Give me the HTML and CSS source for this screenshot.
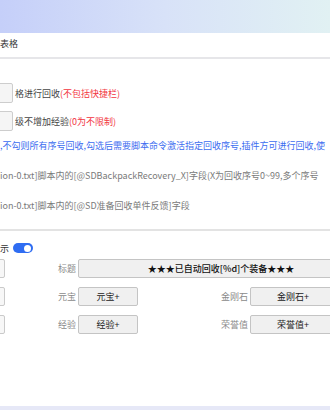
FILE: index.html
```html
<!DOCTYPE html>
<html lang="zh-CN">
<head>
  <meta charset="UTF-8" />
  <meta name="viewport" content="width=device-width, initial-scale=1.0"/>
  <title>回收设置</title>
  <link rel="stylesheet" href="styles.css">
</head>
<body>
  <div class="page">
    <div class="banner"></div>

    <div class="tabs">
      <span class="tab">表格</span>
    </div>

    <div class="content">
      <div class="opt-row">
        <input class="num" type="text" value="">
        <span>格进行回收</span><span class="red">(不包括快捷栏)</span>
      </div>
      <div class="opt-row">
        <input class="num" type="text" value="">
        <span>级不增加经验</span><span class="red">(0为不限制)</span>
      </div>
      <p class="note blue">,不勾则所有序号回收,勾选后需要脚本命令激活指定回收序号,插件方可进行回收,使</p>
      <p class="note">ion-0.txt]脚本内的[@SDBackpackRecovery_X]字段(X为回收序号0~99,多个序号</p>
      <p class="note">ion-0.txt]脚本内的[@SD准备回收单件反馈]字段</p>
    </div>

    <div class="panel">
      <div class="switch-row">
        <span>示</span>
        <span class="switch"><span class="knob"></span></span>
      </div>

      <div class="grid">
        <input class="cut" type="text">
        <label class="lbl">标题</label>
        <input class="field title" type="text" value="★★★已自动回收[%d]个装备★★★">

        <input class="cut" type="text">
        <label class="lbl">元宝</label>
        <input class="field" type="text" value="元宝+">
        <label class="lbl">金刚石</label>
        <input class="field" type="text" value="金刚石+">

        <input class="cut" type="text">
        <label class="lbl">经验</label>
        <input class="field" type="text" value="经验+">
        <label class="lbl">荣誉值</label>
        <input class="field" type="text" value="荣誉值+">
      </div>
    </div>

    <div class="footer"></div>
  </div>
</body>
</html>
```

FILE: styles.css
```css
* {
  margin: 0;
  padding: 0;
  box-sizing: border-box;
}

html, body {
  width: 100%;
  height: 100%;
  overflow: hidden;
  background: #fff;
  font-family: "Noto Sans CJK SC", "Noto Sans", sans-serif;
  font-size: 9px;
  color: #444;
}

.page {
  height: 410px;
  display: flex;
  flex-direction: column;
}

.banner {
  height: 33px;
  background: linear-gradient(90deg, #c5cff9 0%, #d8e2f8 50%, #e1f1f3 100%);
}

.tabs {
  height: 26px;
  display: flex;
  align-items: center;
  border-bottom: 2px solid #e6e6e9;
  padding-bottom: 3px;
}

.tab {
  color: #333;
}

.content {
  padding-top: 24px;
}

.opt-row {
  height: 20px;
  margin-bottom: 8px;
  display: flex;
  align-items: center;
  white-space: nowrap;
}

.opt-row .num {
  width: 30px;
  height: 20px;
  margin-left: -17px;
  margin-right: 2px;
  border: 1px solid #cdcdcd;
  border-radius: 2px;
  background: #f5f5f5;
}

.red {
  color: #f2353f;
}

.note {
  height: 30px;
  line-height: 30px;
  white-space: nowrap;
  color: #7a7a7a;
}

.note.blue {
  margin-top: -8px;
  color: #3b6cf0;
}

.panel {
  margin-top: 8px;
  border-top: 2px solid #e3e3e3;
  padding-top: 12px;
}

.switch-row {
  height: 10px;
  display: flex;
  align-items: center;
  gap: 4px;
  color: #333;
}

.switch {
  width: 20px;
  height: 10px;
  border-radius: 5px;
  background: #2f6df2;
  display: flex;
  align-items: center;
  justify-content: flex-end;
  padding-right: 2px;
}

.knob {
  width: 7px;
  height: 7px;
  border-radius: 50%;
  background: #fff;
}

.grid {
  margin-top: 6px;
  display: grid;
  grid-template-columns: 5px 73px 60px 112px 86px;
  grid-auto-rows: 19px;
  row-gap: 9px;
  align-items: center;
}

.cut {
  grid-column: 1;
  width: 35px;
  height: 19px;
  margin-left: -30px;
  border: 1px solid #cacaca;
  border-radius: 2px;
  background: #f7f7f7;
}

.lbl {
  text-align: right;
  padding-right: 2px;
  color: #8a8a8a;
}

.grid .lbl:nth-child(2),
.grid .lbl:nth-child(5),
.grid .lbl:nth-child(10) {
  grid-column: 2;
}

.field {
  height: 19px;
  width: 100%;
  border: 1px solid #c4c4c4;
  border-radius: 2px;
  background: #f0f0f0;
  font-family: inherit;
  font-size: 9px;
  color: #222;
  text-align: center;
  outline: none;
}

.field.title {
  grid-column: 3 / 6;
  width: 286px;
  justify-self: start;
  font-weight: 500;
  color: #111;
}

.footer {
  margin-top: auto;
  height: 4px;
  background: #e6e8f7;
}
```
